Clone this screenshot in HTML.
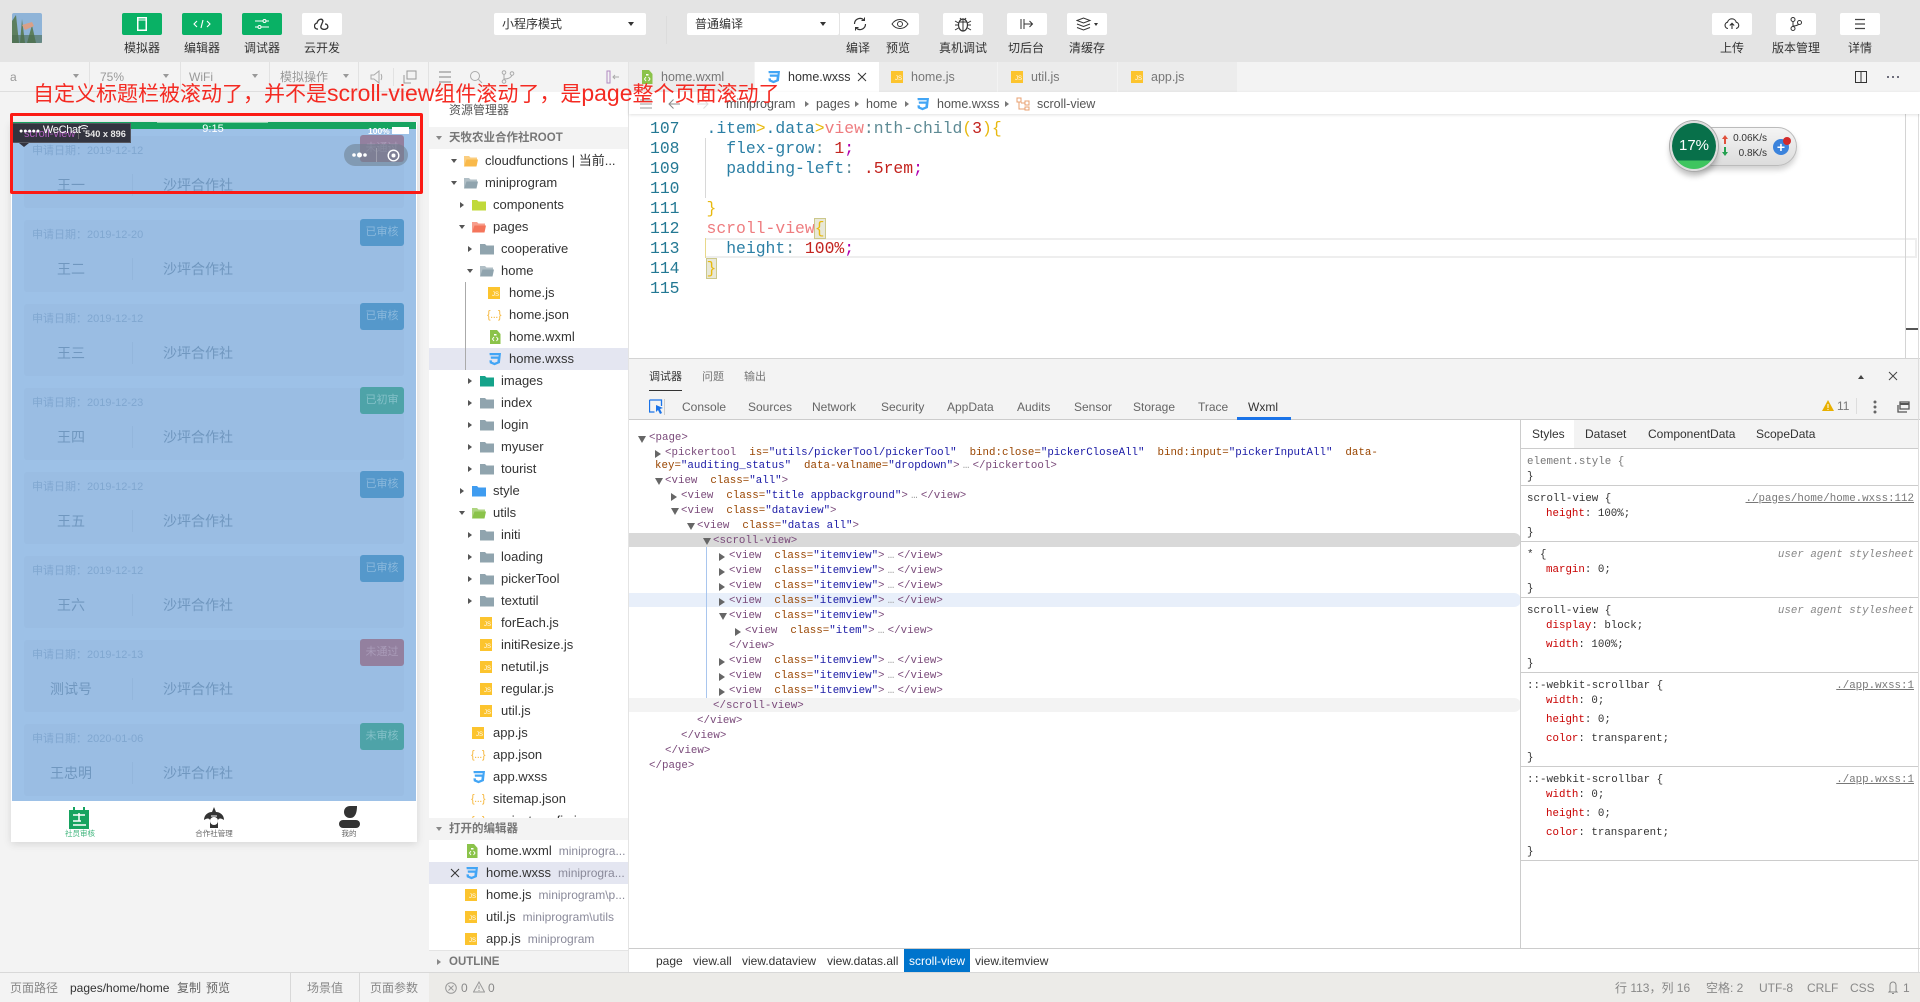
<!DOCTYPE html>
<html lang="zh-CN"><head><meta charset="utf-8"><title>微信开发者工具</title>
<style>
*{box-sizing:border-box;margin:0;padding:0}
html,body{width:1920px;height:1002px;overflow:hidden;background:#fff;font-family:"Liberation Sans","Noto Sans CJK SC",sans-serif;color:#333}
body{position:relative}
.p{position:absolute}
.b{position:absolute;top:13px;width:40px;height:22px;background:#fff;border-radius:2px;display:flex;align-items:center;justify-content:center}
.g{background:#09b165}
.lb{position:absolute;top:41px;font-size:12px;line-height:14px;text-align:center;color:#333;transform:translateX(-50%);white-space:nowrap}
.sel{position:absolute;top:13px;height:22px;background:#fff;font-size:12px;line-height:22px;padding-left:8px;border-radius:2px}
.car{position:absolute;width:0;height:0;border-left:3px solid transparent;border-right:3px solid transparent;border-top:4px solid #333}
.st{position:absolute;top:70px;font-size:12px;line-height:14px;color:#999;white-space:nowrap}
.dv{position:absolute;top:62px;width:1px;height:30px;background:#e2e2e2}
.tab{position:absolute;top:62px;height:30px;background:#ececec;border-right:1px solid #f3f3f3}
.tt{position:absolute;top:69px;font-size:12.5px;line-height:16px;color:#777;white-space:nowrap}
.js{position:absolute;display:block;width:12px;height:12px;background:#fcc42e;color:#fff;font:normal 6px/7px "Liberation Sans",sans-serif;text-align:right;padding:5px 1px 0 0}
.t{position:absolute;left:429px;width:199px;height:22px;font-size:13px;line-height:22px;white-space:nowrap;color:#333}
.t span{position:absolute;left:calc(var(--x) - 429px)}
.t svg,.t .js{position:absolute;left:calc(var(--x) - 450px);top:4px;width:14px;height:14px}
.t .js{width:12px;height:12px;top:5px}
.t .jn{position:absolute;left:calc(var(--x) - 451px);top:0;color:#f6b73c;font-size:11px;letter-spacing:-.5px;font-style:normal}
.t em{font-style:normal;position:absolute}
.a{position:absolute;left:calc(var(--x) - 462px);top:8px;width:0;height:0;border-top:3.5px solid transparent;border-bottom:3.5px solid transparent;border-left:4px solid #555}
.a.d{left:calc(var(--x) - 463px);top:9px;border-left:3.5px solid transparent;border-right:3.5px solid transparent;border-top:4px solid #555;border-bottom:0}
.l0{--x:485px}.l1{--x:493px}.l2{--x:501px}.l3{--x:509px}
.sec{position:absolute;left:429px;width:199px;height:22px;background:#f3f3f3;font-size:11.5px;line-height:22px;font-weight:bold;color:#777;z-index:3;padding-left:20px;white-space:nowrap}
.sec b{position:absolute;left:7px;top:9px;width:0;height:0;border-left:3.5px solid transparent;border-right:3.5px solid transparent;border-top:4px solid #888}
.o{position:absolute;left:429px;width:199px;height:22px;font-size:13px;line-height:22px;white-space:nowrap}
.o span{position:absolute;left:57px}
.o small{font-size:12px;color:#8a8a9a;margin-left:7px}
.o svg{position:absolute;left:36px;top:4px;width:14px;height:14px}
.o .js{left:36px;top:5px}
.c{position:absolute;font:16.4px/20px "Liberation Mono",monospace;white-space:pre;left:706.5px}
.ln{position:absolute;left:650px;font:16.4px/20px "Liberation Mono",monospace;color:#237893}
.k{color:#2b7fa5}.go{color:#e8b90f}.pk{color:#ee7c7f}.gr{color:#5d8a94}.rd{color:#c3231e}.pu{color:#b000b0}
.dt{position:absolute;top:400px;font-size:12px;line-height:14px;color:#666;white-space:nowrap}
.m{position:absolute;font:10.8px/15px "Liberation Mono",monospace;white-space:pre;color:#7a4a7a}
.m i{font-style:normal;color:#994500}.m u{text-decoration:none;color:#1a1aa6}.m s{text-decoration:none;color:#999;display:inline-block;width:13px;text-align:center}
.ar{position:absolute;width:0;height:0;border-top:4px solid transparent;border-bottom:4px solid transparent;border-left:6px solid #666}
.ad{position:absolute;width:0;height:0;border-left:4px solid transparent;border-right:4px solid transparent;border-top:7px solid #666}
.y{position:absolute;font:10.8px/15px "Liberation Mono",monospace;white-space:pre;color:#333}
.y b{font-weight:normal;color:#c80000}
.ln2{position:absolute;left:1521px;width:397px;height:1px;background:#ccc}
.src{position:absolute;right:6px;font:10.8px/15px "Liberation Mono",monospace;color:#777;text-decoration:underline;white-space:pre}
.ua{position:absolute;right:6px;font:italic 10.8px/15px "Liberation Mono",monospace;color:#888;white-space:pre}
.bc{position:absolute;top:953px;font-size:12px;line-height:16px;color:#333;white-space:nowrap}
.sb{position:absolute;top:980px;font-size:12px;line-height:16px;color:#888;white-space:nowrap}
.card{position:absolute;left:24px;width:380px;height:72px;background:#9abde3;border-radius:3px}
.card .d{position:absolute;left:8px;top:7px;font-size:11px;line-height:16px;color:#80a7d0;white-space:nowrap}
.card .nm{position:absolute;left:0;top:39px;width:94px;text-align:center;font-size:14px;line-height:20px;color:#7097bf}
.card .co{position:absolute;left:139px;top:39px;font-size:14px;line-height:20px;color:#7097bf}
.card .sp{position:absolute;left:108px;top:38px;width:1px;height:22px;background:#93b6dc}
.bd{position:absolute;left:336px;top:-1px;width:44px;height:27px;border-radius:3px;background:#5598cb;color:#8ab8dc;font-size:11px;line-height:27px;text-align:center}
.bd.te{background:#4ea3a8;color:#84c0c8}.bd.pr{background:#93809f;color:#a99bb8}
.ti{position:absolute;top:829px;font-size:7.5px;line-height:9px;text-align:center;transform:translateX(-50%);color:#666;white-space:nowrap}
.big{font-size:23px}
</style></head><body>
<svg width="0" height="0" style="position:absolute"><defs>
<symbol id="f" viewBox="0 0 14 14"><path d="M0 2h5l1.5 1.5H14V12.5H0z" fill="currentColor"/></symbol>
<symbol id="fo" viewBox="0 0 14 14"><path d="M0 2h5l1.5 1.5H13V6H3L0 12z" fill="currentColor" opacity=".7"/><path d="M2.500 5.500H14L12.500 12.500H0z" fill="currentColor"/></symbol>
<symbol id="css" viewBox="0 0 14 14"><path d="M1.500 1h11.500l-1.100 10-5.400 2.200-4.700-1.900-.4-2.900h2.400l.2 1.300 2.500 1 2.900-1.100.3-2.900H2.900l-.2-2.200h7.800l.2-1.300H1.700z" fill="#42a5f5"/></symbol>
<symbol id="xm" viewBox="0 0 14 14"><path d="M2 0h7l3.500 4v10H2z" fill="#8bc34a"/><path d="M6 7L4.500 9 6 11M8.500 7L10 9 8.500 11" stroke="#fff" stroke-width="1" fill="none"/><rect x="6" y="4" width="2.500" height="1.500" fill="#fff"/></symbol>
</defs></svg>

<!-- top toolbar -->
<div class="p" style="left:0;top:0;width:1920px;height:62px;background:#e4e4e4"></div>
<svg class="p" style="left:12px;top:13px" width="30" height="30" viewBox="0 0 30 30"><rect width="30" height="30" rx="2" fill="#8fb4d8"/><path d="M0 30V8l4-6 3 28zM8 30l2-24 3 24zM15 30l5-18 4 18z" fill="#5d7f5e"/><path d="M10 12l10-3 2 4-9 4z" fill="#d9a088"/><rect y="22" width="30" height="8" fill="#4a6a50" opacity=".6"/></svg>
<div class="b g" style="left:122px"><svg width="10" height="14" viewBox="0 0 10 14"><rect x=".75" y=".75" width="8.500" height="12.500" fill="none" stroke="#fff" stroke-width="1.500"/><path d="M1 3h8" stroke="#fff"/></svg></div>
<div class="b g" style="left:182px"><svg width="18" height="10" viewBox="0 0 18 10"><path d="M4 2L1 5l3 3M14 2l3 3-3 3M10 1L8 9" stroke="#fff" fill="none" stroke-width="1.100"/></svg></div>
<div class="b g" style="left:242px"><svg width="14" height="12" viewBox="0 0 14 12"><path d="M0 3h8M11 3h3M0 9h3M6 9h8" stroke="#fff"/><circle cx="9.500" cy="3" r="1.500" fill="none" stroke="#fff"/><circle cx="4.500" cy="9" r="1.500" fill="none" stroke="#fff"/></svg></div>
<div class="b" style="left:302px"><svg width="16" height="12" viewBox="0 0 16 12"><path d="M4 11a3 3 0 0 1-1-6c1-4 5-5 6-2L7 8c-1 3 3 4 5 3 3-1 2-5-1-5" fill="none" stroke="#333" stroke-width="1.300"/></svg></div>
<div class="lb" style="left:142px">模拟器</div><div class="lb" style="left:202px">编辑器</div><div class="lb" style="left:262px">调试器</div><div class="lb" style="left:322px">云开发</div>
<div class="sel" style="left:494px;width:152px">小程序模式</div><div class="car" style="left:628px;top:22px"></div>
<div class="p" style="left:666px;top:16px;width:1px;height:28px;background:#dcdcdc"></div>
<div class="sel" style="left:687px;width:152px">普通编译</div><div class="car" style="left:820px;top:22px"></div>
<div class="b" style="left:840px;border-radius:0"><svg width="16" height="16" viewBox="0 0 16 16"><path d="M2.500 8a5.500 5.500 0 0 1 9.500-3.800M13.500 8A5.500 5.500 0 0 1 4 11.800" fill="none" stroke="#333" stroke-width="1.200"/><path d="M12.500 1.500v3h-3M3.500 14.500v-3h3" fill="none" stroke="#333"/></svg></div>
<div class="b" style="left:880px;width:39px;border-radius:0 2px 2px 0"><svg width="18" height="12" viewBox="0 0 18 12"><path d="M1 6c4-6 12-6 16 0-4 6-12 6-16 0z" fill="none" stroke="#333"/><circle cx="9" cy="6" r="2.500" fill="none" stroke="#333"/></svg></div>
<div class="lb" style="left:858px">编译</div><div class="lb" style="left:898px">预览</div>
<div class="b" style="left:943px"><svg width="18" height="16" viewBox="0 0 18 16"><ellipse cx="9" cy="9" rx="4.500" ry="6" fill="none" stroke="#333" stroke-width="1.200"/><path d="M9 3v12M6 2l1.500 2M12 2l-1.500 2M1 5l3.500 2M17 5l-3.500 2M1 9h3M14 9h3M1 14l3.500-2M17 14l-3.500-2M5 6h8" stroke="#333"/></svg></div>
<div class="b" style="left:1007px"><svg width="14" height="12" viewBox="0 0 14 12"><path d="M1 1v10M4 1v10M4 6h8M9.500 3l3 3-3 3" fill="none" stroke="#333"/></svg></div>
<div class="b" style="left:1067px"><svg width="22" height="14" viewBox="0 0 22 14"><path d="M1 3.500L7.500 1 14 3.500 7.500 6zM1 7l6.500 2.500L14 7M1 10.500L7.500 13 14 10.500" fill="none" stroke="#333"/><path d="M18 6h4l-2 3z" fill="#333"/></svg></div>
<div class="lb" style="left:963px">真机调试</div><div class="lb" style="left:1026px">切后台</div><div class="lb" style="left:1087px">清缓存</div>
<div class="b" style="left:1712px"><svg width="16" height="12" viewBox="0 0 16 12"><path d="M4 10.500a3.200 3.200 0 0 1-.5-6.300 4.500 4.500 0 0 1 8.700 0 3.200 3.200 0 0 1-.2 6.300M8 11V5.500M5.800 7.500L8 5.300l2.200 2.200" fill="none" stroke="#333" stroke-width="1.100"/></svg></div>
<div class="b" style="left:1776px"><svg width="12" height="14" viewBox="0 0 12 14"><circle cx="3" cy="2.500" r="2" fill="none" stroke="#333"/><circle cx="3" cy="11.500" r="2" fill="none" stroke="#333"/><circle cx="9.500" cy="5.500" r="2" fill="none" stroke="#333"/><path d="M3 4.500v5M3 9c3 0 5-1 6-2" fill="none" stroke="#333"/></svg></div>
<div class="b" style="left:1840px"><svg width="12" height="12" viewBox="0 0 12 12"><path d="M1 1.500h10M1 6h10M1 10.500h10" stroke="#444" stroke-width="1.300"/></svg></div>
<div class="lb" style="left:1732px">上传</div><div class="lb" style="left:1796px">版本管理</div><div class="lb" style="left:1860px">详情</div>

<!-- simulator toolbar + area -->
<div class="p" style="left:0;top:62px;width:429px;height:910px;background:#f3f3f3"></div>
<div class="p" style="left:0;top:91px;width:429px;height:1px;background:#dedede"></div>
<div class="dv" style="left:89px"></div><div class="dv" style="left:180px"></div><div class="dv" style="left:269px"></div><div class="dv" style="left:358px"></div><div class="dv" style="left:393px;top:68px;height:18px"></div><div class="dv" style="left:428px"></div>
<div class="st" style="left:10px">a</div><div class="st" style="left:100px">75%</div><div class="st" style="left:189px">WiFi</div><div class="st" style="left:280px">模拟操作</div>
<div class="car" style="left:73px;top:74px;border-top-color:#999"></div><div class="car" style="left:163px;top:74px;border-top-color:#999"></div><div class="car" style="left:252px;top:74px;border-top-color:#999"></div><div class="car" style="left:343px;top:74px;border-top-color:#999"></div>
<svg class="p" style="left:370px;top:70px" width="14" height="14" viewBox="0 0 14 14"><path d="M1 5h3l5-4v12l-5-4H1zM11 4c1 2 1 4 0 6" fill="none" stroke="#aaa"/></svg>
<svg class="p" style="left:403px;top:70px" width="14" height="14" viewBox="0 0 14 14"><path d="M4 1h9v8H4zM1 5v8h7" fill="none" stroke="#999"/></svg>
<!-- explorer toolbar -->
<div class="p" style="left:429px;top:62px;width:199px;height:30px;background:#f3f3f3"></div>
<svg class="p" style="left:438px;top:70px" width="14" height="14" viewBox="0 0 14 14"><path d="M1 2h12M1 7h12M1 12h12" stroke="#999" stroke-width="1.300"/></svg>
<svg class="p" style="left:469px;top:70px" width="14" height="14" viewBox="0 0 14 14"><circle cx="6" cy="6" r="4.500" fill="none" stroke="#aaa"/><path d="M9.500 9.500L13 13" stroke="#aaa"/></svg>
<svg class="p" style="left:501px;top:70px" width="14" height="14" viewBox="0 0 14 14"><circle cx="3" cy="2.500" r="1.800" fill="none" stroke="#aaa"/><circle cx="3" cy="11.500" r="1.800" fill="none" stroke="#aaa"/><circle cx="11" cy="3.500" r="1.800" fill="none" stroke="#aaa"/><path d="M3 4.500v5M3 9c4 0 7-1 8-4" fill="none" stroke="#aaa"/></svg>
<svg class="p" style="left:606px;top:70px" width="14" height="14" viewBox="0 0 14 14"><rect x="1" y="1" width="3" height="12" fill="none" stroke="#b08ac0"/><path d="M13 7H7M9 5L7 7l2 2" fill="none" stroke="#aaa"/></svg>

<!-- phone -->
<div class="p" style="left:11px;top:122px;width:406px;height:720px;background:#fff;box-shadow:0 2px 8px rgba(0,0,0,.12)"></div>
<div class="p" style="left:12px;top:122px;width:404px;height:679px;background:#9dc1e7;overflow:hidden">
 <div class="p" style="left:0;top:0;width:404px;height:7px;background:#16a35f"></div>
 <div class="p" style="left:145px;top:0;width:111px;height:1px;background:#8fd6ad"></div>
</div>
<div class="card" style="top:136px"><div class="d">申请日期：2019-12-12</div><div class="nm">王一</div><div class="sp"></div><div class="co">沙坪合作社</div><div class="bd pr">未通过</div></div>
<div class="card" style="top:220px"><div class="d">申请日期：2019-12-20</div><div class="nm">王二</div><div class="sp"></div><div class="co">沙坪合作社</div><div class="bd">已审核</div></div>
<div class="card" style="top:304px"><div class="d">申请日期：2019-12-12</div><div class="nm">王三</div><div class="sp"></div><div class="co">沙坪合作社</div><div class="bd">已审核</div></div>
<div class="card" style="top:388px"><div class="d">申请日期：2019-12-23</div><div class="nm">王四</div><div class="sp"></div><div class="co">沙坪合作社</div><div class="bd te">已初审</div></div>
<div class="card" style="top:472px"><div class="d">申请日期：2019-12-12</div><div class="nm">王五</div><div class="sp"></div><div class="co">沙坪合作社</div><div class="bd">已审核</div></div>
<div class="card" style="top:556px"><div class="d">申请日期：2019-12-12</div><div class="nm">王六</div><div class="sp"></div><div class="co">沙坪合作社</div><div class="bd">已审核</div></div>
<div class="card" style="top:640px"><div class="d">申请日期：2019-12-13</div><div class="nm">测试号</div><div class="sp"></div><div class="co">沙坪合作社</div><div class="bd pr">未通过</div></div>
<div class="card" style="top:724px"><div class="d">申请日期：2020-01-06</div><div class="nm">王忠明</div><div class="sp"></div><div class="co">沙坪合作社</div><div class="bd te">未审核</div></div>
<!-- phone tabbar -->
<svg class="p" style="left:69px;top:807px" width="21" height="22" viewBox="0 0 21 22"><path d="M0 3h4V0h2v3h8V0h2v3h4v19H0z" fill="#16a35f"/><path d="M4 8h12M10 6v8M4 14h8M4 18h13" stroke="#fff" stroke-width="1.500"/></svg>
<svg class="p" style="left:204px;top:807px" width="20" height="22" viewBox="0 0 20 22"><path d="M10 0l2 5c4 0 8 3 8 8-3-2-5-2-6 0v8H6v-8c-1-2-3-2-6 0 0-5 4-8 8-8z" fill="#333"/><circle cx="10" cy="14" r="4" fill="#fff"/><path d="M7 9h6" stroke="#fff"/></svg>
<svg class="p" style="left:339px;top:806px" width="21" height="22" viewBox="0 0 21 22"><path d="M5 6c0-4 3-6 6-6h7c0 5-1 12-7 12-4 0-6-3-6-6z" fill="#333"/><rect x="0" y="14" width="21" height="8" rx="4" fill="#333"/></svg>
<div class="ti" style="left:80px;color:#3fb57c">社员审核</div><div class="ti" style="left:214px">合作社管理</div><div class="ti" style="left:349px">我的</div>
<!-- phone overlay -->
<div class="p" style="left:200px;top:122px;font-size:11px;line-height:14px;color:#fff;width:26px;text-align:center">9:15</div>
<div class="p" style="left:368px;top:125px;font-size:8.500px;line-height:12px;color:#fff;font-weight:bold">100%</div>
<div class="p" style="left:392px;top:127px;width:17px;height:7px;background:#fff;border:1px solid #fff"></div>
<div class="p" style="left:344px;top:144px;width:64px;height:22px;border-radius:11px;background:rgba(110,125,140,.55)"></div>
<div class="p" style="left:376px;top:148px;width:1px;height:14px;background:rgba(255,255,255,.25)"></div>
<svg class="p" style="left:352px;top:150px" width="16" height="10" viewBox="0 0 16 10"><circle cx="2" cy="5" r="1.800" fill="#fff"/><circle cx="7.500" cy="5" r="2.500" fill="#fff"/><circle cx="13" cy="5" r="1.800" fill="#fff"/></svg>
<svg class="p" style="left:387px;top:149px" width="13" height="13" viewBox="0 0 13 13"><circle cx="6.500" cy="6.500" r="5.300" fill="none" stroke="#fff" stroke-width="1.400"/><circle cx="6.500" cy="6.500" r="2" fill="#fff"/></svg>
<div class="p" style="left:12px;top:123px;width:119px;height:20px;background:#33343f;border:1px solid #55565f"></div>
<div class="p" style="left:19px;top:143px;width:0;height:0;border-left:5px solid transparent;border-right:5px solid transparent;border-top:4px solid #33343f"></div>
<div class="p" style="left:24px;top:127px;font-size:11px;line-height:14px;color:#b05fc0">scroll-view</div>
<div class="p" style="left:85px;top:127px;font-size:9.200px;line-height:14px;color:#e8e8e8;font-weight:bold;white-space:nowrap">540 x 896</div>
<div class="p" style="left:78px;top:129px;width:1px;height:10px;background:#666"></div>
<div class="p" style="left:19px;top:123px;font-size:11px;line-height:14px;color:#fff;white-space:nowrap;letter-spacing:-.3px"><span style="font-size:7px;letter-spacing:0">●●●●●</span> WeChat</div>
<svg class="p" style="left:80px;top:125px" width="8" height="7" viewBox="0 0 8 7"><path d="M0 2c2-2 6-2 8 0M1.500 4c1.500-1 3.500-1 5 0" stroke="#fff" fill="none"/><path d="M3 5.500h2L4 7z" fill="#fff"/></svg>

<!-- explorer -->
<div class="p" style="left:429px;top:92px;width:199px;height:880px;background:#fff"></div>
<div class="p" style="left:628px;top:62px;width:1px;height:910px;background:#e4e4e4"></div>
<div class="p" style="left:449px;top:103px;font-size:12px;line-height:14px;color:#555">资源管理器</div>
<div class="sec" style="top:127px"><b></b>天牧农业合作社ROOT</div>
<div class="p" style="left:429px;top:348px;width:199px;height:22px;background:#e4e6f1"></div>
<div class="p" style="left:465px;top:282px;width:1px;height:88px;background:#aaa;z-index:2"></div>

<div class="t l0" style="top:150px"><b class="a d"></b><svg style="color:#f9b94a"><use href="#fo"/></svg><span>cloudfunctions | 当前...</span></div>
<div class="t l0" style="top:172px"><b class="a d"></b><svg style="color:#90a4ae"><use href="#fo"/></svg><span>miniprogram</span></div>
<div class="t l1" style="top:194px"><b class="a"></b><svg style="color:#c0d93a"><use href="#f"/></svg><span>components</span></div>
<div class="t l1" style="top:216px"><b class="a d"></b><svg style="color:#f4755b"><use href="#fo"/></svg><span>pages</span></div>
<div class="t l2" style="top:238px"><b class="a"></b><svg style="color:#90a4ae"><use href="#f"/></svg><span>cooperative</span></div>
<div class="t l2" style="top:260px"><b class="a d"></b><svg style="color:#90a4ae"><use href="#fo"/></svg><span>home</span></div>
<div class="t l3" style="top:282px"><i class="js">JS</i><span>home.js</span></div>
<div class="t l3" style="top:304px"><i class="jn">{...}</i><span>home.json</span></div>
<div class="t l3" style="top:326px"><svg><use href="#xm"/></svg><span>home.wxml</span></div>
<div class="t l3" style="top:348px"><svg><use href="#css"/></svg><span>home.wxss</span></div>
<div class="t l2" style="top:370px"><b class="a"></b><svg style="color:#15a38a"><use href="#f"/></svg><span>images</span></div>
<div class="t l2" style="top:392px"><b class="a"></b><svg style="color:#90a4ae"><use href="#f"/></svg><span>index</span></div>
<div class="t l2" style="top:414px"><b class="a"></b><svg style="color:#90a4ae"><use href="#f"/></svg><span>login</span></div>
<div class="t l2" style="top:436px"><b class="a"></b><svg style="color:#90a4ae"><use href="#f"/></svg><span>myuser</span></div>
<div class="t l2" style="top:458px"><b class="a"></b><svg style="color:#90a4ae"><use href="#f"/></svg><span>tourist</span></div>
<div class="t l1" style="top:480px"><b class="a"></b><svg style="color:#3f9cf0"><use href="#f"/></svg><span>style</span></div>
<div class="t l1" style="top:502px"><b class="a d"></b><svg style="color:#8bc34a"><use href="#fo"/></svg><span>utils</span></div>
<div class="t l2" style="top:524px"><b class="a"></b><svg style="color:#90a4ae"><use href="#f"/></svg><span>initi</span></div>
<div class="t l2" style="top:546px"><b class="a"></b><svg style="color:#90a4ae"><use href="#f"/></svg><span>loading</span></div>
<div class="t l2" style="top:568px"><b class="a"></b><svg style="color:#90a4ae"><use href="#f"/></svg><span>pickerTool</span></div>
<div class="t l2" style="top:590px"><b class="a"></b><svg style="color:#90a4ae"><use href="#f"/></svg><span>textutil</span></div>
<div class="t l2" style="top:612px"><i class="js">JS</i><span>forEach.js</span></div>
<div class="t l2" style="top:634px"><i class="js">JS</i><span>initiResize.js</span></div>
<div class="t l2" style="top:656px"><i class="js">JS</i><span>netutil.js</span></div>
<div class="t l2" style="top:678px"><i class="js">JS</i><span>regular.js</span></div>
<div class="t l2" style="top:700px"><i class="js">JS</i><span>util.js</span></div>
<div class="t l1" style="top:722px"><i class="js">JS</i><span>app.js</span></div>
<div class="t l1" style="top:744px"><i class="jn">{...}</i><span>app.json</span></div>
<div class="t l1" style="top:766px"><svg><use href="#css"/></svg><span>app.wxss</span></div>
<div class="t l1" style="top:788px"><i class="jn">{...}</i><span>sitemap.json</span></div>
<div class="t l1" style="top:810px"><i class="jn">{...}</i><span>project.config.json</span></div>

<div class="sec" style="top:818px"><b></b>打开的编辑器</div>
<div class="o" style="top:840px"><svg><use href="#xm"/></svg><span>home.wxml<small>miniprogra...</small></span></div>
<div class="o" style="top:862px;background:#e4e6f1"><svg><use href="#css"/></svg><svg style="left:20px;top:5px;width:12px;height:12px" viewBox="0 0 12 12"><path d="M2 2l8 8M10 2l-8 8" stroke="#333"/></svg><span>home.wxss<small>miniprogra...</small></span></div>
<div class="o" style="top:884px"><i class="js">JS</i><span>home.js<small>miniprogram\p...</small></span></div>
<div class="o" style="top:906px"><i class="js">JS</i><span>util.js<small>miniprogram\utils</small></span></div>
<div class="o" style="top:928px"><i class="js">JS</i><span>app.js<small>miniprogram</small></span></div>
<div class="sec" style="top:950px;border-top:1px solid #e4e4e4"><b style="border:0;border-top:3.500px solid transparent;border-bottom:3.500px solid transparent;border-left:4px solid #888;left:8px;top:8px"></b>OUTLINE</div>

<!-- editor tabs -->
<div class="p" style="left:629px;top:62px;width:1291px;height:30px;background:#f3f3f3"></div>
<div class="tab" style="left:629px;width:126px"></div>
<div class="p" style="left:755px;top:62px;width:124px;height:30px;background:#fff"></div>
<div class="tab" style="left:879px;width:119px"></div><div class="tab" style="left:998px;width:120px"></div><div class="tab" style="left:1118px;width:120px"></div>
<svg class="p" style="left:640px;top:70px" width="14" height="14"><use href="#xm"/></svg>
<div class="tt" style="left:661px">home.wxml</div>
<svg class="p" style="left:767px;top:70px" width="14" height="14"><use href="#css"/></svg>
<div class="tt" style="left:788px;color:#333">home.wxss</div>
<svg class="p" style="left:856px;top:71px" width="12" height="12" viewBox="0 0 12 12"><path d="M2 2l8 8M10 2l-8 8" stroke="#333"/></svg>
<i class="js" style="left:891px;top:71px">JS</i><div class="tt" style="left:911px">home.js</div>
<i class="js" style="left:1011px;top:71px">JS</i><div class="tt" style="left:1031px">util.js</div>
<i class="js" style="left:1131px;top:71px">JS</i><div class="tt" style="left:1151px">app.js</div>
<svg class="p" style="left:1854px;top:70px" width="14" height="14" viewBox="0 0 14 14"><rect x="1.500" y="1.500" width="11" height="11" fill="none" stroke="#333"/><path d="M7 1.500v11" stroke="#333"/></svg>
<svg class="p" style="left:1885px;top:73px" width="16" height="8" viewBox="0 0 16 8"><circle cx="3" cy="4" r="1" fill="#445"/><circle cx="8" cy="4" r="1" fill="#445"/><circle cx="13" cy="4" r="1" fill="#445"/></svg>

<!-- breadcrumb -->
<div class="p" style="left:629px;top:92px;width:1291px;height:22px;background:#fff;box-shadow:0 1px 3px rgba(0,0,0,.12);z-index:1"></div>
<div style="position:absolute;left:0;top:0;z-index:2">
<svg class="p" style="left:640px;top:98px" width="12" height="12" viewBox="0 0 12 12"><path d="M0 2h12M0 6h12M0 10h12" stroke="#999"/></svg>
<svg class="p" style="left:668px;top:98px" width="13" height="12" viewBox="0 0 13 12"><path d="M12 6H1M5.500 1.500L1 6l4.500 4.500" fill="none" stroke="#888"/></svg>
<svg class="p" style="left:696px;top:98px" width="13" height="12" viewBox="0 0 13 12"><path d="M1 6h11M7.500 1.500L12 6l-4.500 4.500" fill="none" stroke="#ddd"/></svg>
<div class="tt" style="left:726px;top:96px;color:#555">miniprogram</div><div class="tt" style="left:816px;top:96px;color:#555">pages</div><div class="tt" style="left:866px;top:96px;color:#555">home</div><div class="tt" style="left:937px;top:96px;color:#555">home.wxss</div><div class="tt" style="left:1037px;top:96px;color:#555">scroll-view</div>
<svg class="p" style="left:916px;top:97px" width="14" height="14"><use href="#css"/></svg>
<svg class="p" style="left:1016px;top:97px" width="14" height="14" viewBox="0 0 14 14"><rect x="1" y="1" width="4" height="4" fill="none" stroke="#e8a070"/><rect x="9" y="4" width="4" height="4" fill="none" stroke="#e8a070"/><rect x="9" y="10" width="4" height="3" fill="none" stroke="#e8a070"/><path d="M3 5v7h6M5 6h4" fill="none" stroke="#e8a070"/></svg>
<div class="car" style="left:805px;top:101px;border:0;border-top:3px solid transparent;border-bottom:3px solid transparent;border-left:4px solid #777"></div>
<div class="car" style="left:855px;top:101px;border:0;border-top:3px solid transparent;border-bottom:3px solid transparent;border-left:4px solid #777"></div>
<div class="car" style="left:905px;top:101px;border:0;border-top:3px solid transparent;border-bottom:3px solid transparent;border-left:4px solid #777"></div>
<div class="car" style="left:1005px;top:101px;border:0;border-top:3px solid transparent;border-bottom:3px solid transparent;border-left:4px solid #777"></div>
</div>

<!-- code -->
<div class="p" style="left:706px;top:238px;width:1211px;height:20px;border:2px solid #eee;border-left:0"></div>
<div class="p" style="left:705px;top:138px;width:1px;height:60px;background:#d8d8d8"></div>
<div class="p" style="left:705px;top:238px;width:1px;height:20px;background:#e8d88a"></div>
<div class="p" style="left:1905px;top:114px;width:1px;height:244px;background:#d4d4d4"></div>
<div class="p" style="left:1906px;top:328px;width:13px;height:2px;background:#555"></div>
<div class="p" style="left:1918px;top:114px;width:1px;height:244px;background:#ddd"></div>
<div style="position:absolute;left:0;top:1px">
<div class="ln" style="top:118px">107</div><div class="ln" style="top:138px">108</div><div class="ln" style="top:158px">109</div><div class="ln" style="top:178px">110</div><div class="ln" style="top:198px">111</div><div class="ln" style="top:218px">112</div><div class="ln" style="top:238px">113</div><div class="ln" style="top:258px">114</div><div class="ln" style="top:278px">115</div>
<div class="c" style="top:118px"><span class="k">.item</span><span class="go">&gt;</span><span class="k">.data</span><span class="go">&gt;</span><span class="pk">view</span><span class="gr">:nth-child</span><span class="go">(</span><span class="rd">3</span><span class="go">){</span></div>
<div class="c" style="top:138px">  <span class="k">flex-grow</span><span class="gr">:</span> <span class="rd">1</span><span class="pu">;</span></div>
<div class="c" style="top:158px">  <span class="k">padding-left</span><span class="gr">:</span> <span class="rd">.5rem</span><span class="pu">;</span></div>
<div class="c" style="top:198px"><span class="go">}</span></div>
<div class="c" style="top:218px"><span class="pk">scroll-view</span><span class="go" style="background:#e8e8d8;outline:1px solid #ccc88a">{</span></div>
<div class="c" style="top:238px">  <span class="k">height</span><span class="gr">:</span> <span class="rd">100%</span><span class="pu">;</span></div>
<div class="c" style="top:258px"><span class="go" style="background:#e8e8d8;outline:1px solid #ccc88a">}</span></div>
</div>

<!-- float widget -->
<div class="p" style="left:1693px;top:127px;width:104px;height:39px;border-radius:0 20px 20px 0;background:linear-gradient(#f4f4f4,#dcdcdc);border:1px solid #bbb;box-shadow:0 4px 6px rgba(0,0,0,.18);z-index:3"></div>
<div class="p" style="left:1670px;top:121px;width:48px;height:50px;border-radius:50%;background:linear-gradient(#08704a 82%,#3fc55f 82%);border:2px solid #ddd;box-shadow:0 0 0 1px #aaa,0 5px 6px rgba(0,0,0,.25);z-index:4;color:#fff;font-size:15px;line-height:46px;text-align:center">17%</div>
<svg class="p" style="left:1721px;top:134px;z-index:4" width="8" height="32" viewBox="0 0 8 32"><path d="M4 1L7 5H5v5H3V5H1z" fill="#e0513c"/><path d="M4 22l3-4H5v-5H3v5H1z" fill="#24a050"/></svg>
<div class="p" style="left:1727px;top:133px;width:40px;text-align:right;font-size:10px;line-height:12px;color:#333;z-index:4">0.06K/s</div>
<div class="p" style="left:1727px;top:148px;width:40px;text-align:right;font-size:10px;line-height:12px;color:#333;z-index:4">0.8K/s</div>
<div class="p" style="left:1773px;top:139px;width:16px;height:16px;border-radius:50%;background:#3b83dc;color:#fff;font:bold 14px/16px 'Liberation Sans',sans-serif;text-align:center;z-index:4">+</div>
<div class="p" style="left:1783px;top:137px;width:8px;height:8px;border-radius:50%;background:#d32a2a;z-index:5"></div>

<!-- devtools -->
<div class="p" style="left:629px;top:358px;width:1291px;height:62px;background:#f3f3f3;border-top:1px solid #d4d4d4;border-bottom:1px solid #ccc"></div>
<div class="p" style="left:649px;top:370px;font-size:11px;line-height:14px;color:#333">调试器</div><div class="p" style="left:702px;top:370px;font-size:11px;line-height:14px;color:#777">问题</div><div class="p" style="left:744px;top:370px;font-size:11px;line-height:14px;color:#777">输出</div>
<div class="p" style="left:649px;top:390px;width:33px;height:1px;background:#333"></div>
<svg class="p" style="left:649px;top:399px" width="15" height="16" viewBox="0 0 15 16"><path d="M.500 1h12v6M.500 1v12h5" fill="none" stroke="#1a73e8" stroke-width="1.300"/><path d="M7 6l7 3-3 1 2 4-2 1-2-4-2 2z" fill="#1a73e8"/></svg>
<div class="p" style="left:664px;top:399px;width:1px;height:16px;background:#ccc"></div>
<div class="dt" style="left:682px">Console</div><div class="dt" style="left:748px">Sources</div><div class="dt" style="left:812px">Network</div><div class="dt" style="left:881px">Security</div><div class="dt" style="left:947px">AppData</div><div class="dt" style="left:1017px">Audits</div><div class="dt" style="left:1074px">Sensor</div><div class="dt" style="left:1133px">Storage</div><div class="dt" style="left:1198px">Trace</div><div class="dt" style="left:1248px;color:#333">Wxml</div>
<div class="p" style="left:1237px;top:417px;width:54px;height:3px;background:#1a73e8"></div>
<div class="car" style="left:1858px;top:375px;border-top:0;border-bottom:4px solid #444"></div>
<svg class="p" style="left:1888px;top:371px" width="10" height="10" viewBox="0 0 10 10"><path d="M1 1l8 8M9 1L1 9" stroke="#444"/></svg>
<svg class="p" style="left:1822px;top:400px" width="12" height="11" viewBox="0 0 12 11"><path d="M6 0l6 11H0z" fill="#e8b000"/><path d="M6 4v4M6 9v1" stroke="#fff"/></svg>
<div class="p" style="left:1837px;top:399px;font-size:12px;line-height:14px;color:#777">11</div>
<div class="p" style="left:1856px;top:398px;width:1px;height:16px;background:#ddd"></div>
<svg class="p" style="left:1873px;top:400px" width="4" height="14" viewBox="0 0 4 14"><circle cx="2" cy="2" r="1.500" fill="#666"/><circle cx="2" cy="7" r="1.500" fill="#666"/><circle cx="2" cy="12" r="1.500" fill="#666"/></svg>
<svg class="p" style="left:1897px;top:401px" width="13" height="12" viewBox="0 0 13 12"><path d="M3 1h9v7H3z" fill="none" stroke="#555" stroke-width="1.300"/><path d="M3 3h9" stroke="#555" stroke-width="2"/><path d="M1 4v7h9" fill="none" stroke="#555" stroke-width="1.300"/></svg>

<!-- wxml tree -->
<div class="p" style="left:629px;top:533px;width:892px;height:14px;background:#d9d9d9;border-radius:0 7px 7px 0"></div>
<div class="p" style="left:629px;top:593px;width:892px;height:14px;background:#e8effa;border-radius:0 7px 7px 0"></div>
<div class="p" style="left:629px;top:698px;width:892px;height:14px;background:#f3f3f3;border-radius:0 7px 7px 0"></div>
<div class="p" style="left:706px;top:547px;width:1px;height:151px;background:#a9c6ee"></div>

<div style="position:absolute;left:0;top:1.500px">
<div class="ad" style="left:638px;top:434px"></div><div class="m" style="left:649px;top:429px">&lt;page&gt;</div>
<div class="ar" style="left:655px;top:448px"></div><div class="m" style="left:665px;top:444px">&lt;pickertool  <i>is=</i><u>"utils/pickerTool/pickerTool"</u>  <i>bind:close=</i><u>"pickerCloseAll"</u>  <i>bind:input=</i><u>"pickerInputAll"</u>  <i>data-</i></div>
<div class="m" style="left:655px;top:457px"><i>key=</i><u>"auditing_status"</u>  <i>data-valname=</i><u>"dropdown"</u>&gt;<s>…</s>&lt;/pickertool&gt;</div>
<div class="ad" style="left:655px;top:476px"></div><div class="m" style="left:665px;top:472px">&lt;view  <i>class=</i><u>"all"</u>&gt;</div>
<div class="ar" style="left:671px;top:491px"></div><div class="m" style="left:681px;top:487px">&lt;view  <i>class=</i><u>"title appbackground"</u>&gt;<s>…</s>&lt;/view&gt;</div>
<div class="ad" style="left:671px;top:506px"></div><div class="m" style="left:681px;top:502px">&lt;view  <i>class=</i><u>"dataview"</u>&gt;</div>
<div class="ad" style="left:687px;top:521px"></div><div class="m" style="left:697px;top:517px">&lt;view  <i>class=</i><u>"datas all"</u>&gt;</div>
<div class="ad" style="left:703px;top:536px"></div><div class="m" style="left:713px;top:532px">&lt;scroll-view&gt;</div>
<div class="ar" style="left:719px;top:551px"></div><div class="m" style="left:729px;top:547px">&lt;view  <i>class=</i><u>"itemview"</u>&gt;<s>…</s>&lt;/view&gt;</div>
<div class="ar" style="left:719px;top:566px"></div><div class="m" style="left:729px;top:562px">&lt;view  <i>class=</i><u>"itemview"</u>&gt;<s>…</s>&lt;/view&gt;</div>
<div class="ar" style="left:719px;top:581px"></div><div class="m" style="left:729px;top:577px">&lt;view  <i>class=</i><u>"itemview"</u>&gt;<s>…</s>&lt;/view&gt;</div>
<div class="ar" style="left:719px;top:596px"></div><div class="m" style="left:729px;top:592px">&lt;view  <i>class=</i><u>"itemview"</u>&gt;<s>…</s>&lt;/view&gt;</div>
<div class="ad" style="left:719px;top:611px"></div><div class="m" style="left:729px;top:607px">&lt;view  <i>class=</i><u>"itemview"</u>&gt;</div>
<div class="ar" style="left:735px;top:626px"></div><div class="m" style="left:745px;top:622px">&lt;view  <i>class=</i><u>"item"</u>&gt;<s>…</s>&lt;/view&gt;</div>
<div class="m" style="left:729px;top:637px">&lt;/view&gt;</div>
<div class="ar" style="left:719px;top:656px"></div><div class="m" style="left:729px;top:652px">&lt;view  <i>class=</i><u>"itemview"</u>&gt;<s>…</s>&lt;/view&gt;</div>
<div class="ar" style="left:719px;top:671px"></div><div class="m" style="left:729px;top:667px">&lt;view  <i>class=</i><u>"itemview"</u>&gt;<s>…</s>&lt;/view&gt;</div>
<div class="ar" style="left:719px;top:686px"></div><div class="m" style="left:729px;top:682px">&lt;view  <i>class=</i><u>"itemview"</u>&gt;<s>…</s>&lt;/view&gt;</div>
<div class="m" style="left:713px;top:697px">&lt;/scroll-view&gt;</div>
<div class="m" style="left:697px;top:712px">&lt;/view&gt;</div>
<div class="m" style="left:681px;top:727px">&lt;/view&gt;</div>
<div class="m" style="left:665px;top:742px">&lt;/view&gt;</div>
<div class="m" style="left:649px;top:757px">&lt;/page&gt;</div>
</div>

<!-- styles -->
<div class="p" style="left:1520px;top:420px;width:1px;height:528px;background:#ccc"></div>
<div class="p" style="left:1918px;top:358px;width:1px;height:614px;background:#ddd"></div>
<div class="p" style="left:1521px;top:420px;width:397px;height:28px;background:#f3f3f3"></div>
<div class="p" style="left:1521px;top:420px;width:53px;height:28px;background:#fff"></div>
<div class="dt" style="left:1532px;top:427px;color:#333">Styles</div><div class="dt" style="left:1585px;top:427px;color:#333">Dataset</div><div class="dt" style="left:1648px;top:427px;color:#333">ComponentData</div><div class="dt" style="left:1756px;top:427px;color:#333">ScopeData</div>
<div class="ln2" style="top:448px"></div><div class="ln2" style="top:485px"></div><div class="ln2" style="top:541px"></div><div class="ln2" style="top:597px"></div><div class="ln2" style="top:672px"></div><div class="ln2" style="top:766px"></div><div class="ln2" style="top:860px"></div>
<div style="position:absolute;left:0;top:1.500px;width:1920px">
<div class="y" style="left:1527px;top:453px;color:#777">element.style {</div><div class="y" style="left:1527px;top:468px">}</div>
<div class="y" style="left:1527px;top:490px">scroll-view {</div><div class="src" style="top:490px">./pages/home/home.wxss:112</div><div class="y" style="left:1546px;top:505px"><b>height</b>: 100%;</div><div class="y" style="left:1527px;top:524px">}</div>
<div class="y" style="left:1527px;top:546px">* {</div><div class="ua" style="top:546px">user agent stylesheet</div><div class="y" style="left:1546px;top:561px"><b>margin</b>: 0;</div><div class="y" style="left:1527px;top:580px">}</div>
<div class="y" style="left:1527px;top:602px">scroll-view {</div><div class="ua" style="top:602px">user agent stylesheet</div><div class="y" style="left:1546px;top:617px"><b>display</b>: block;</div><div class="y" style="left:1546px;top:636px"><b>width</b>: 100%;</div><div class="y" style="left:1527px;top:655px">}</div>
<div class="y" style="left:1527px;top:677px">::-webkit-scrollbar {</div><div class="src" style="top:677px">./app.wxss:1</div><div class="y" style="left:1546px;top:692px"><b>width</b>: 0;</div><div class="y" style="left:1546px;top:711px"><b>height</b>: 0;</div><div class="y" style="left:1546px;top:730px"><b>color</b>: transparent;</div><div class="y" style="left:1527px;top:749px">}</div>
<div class="y" style="left:1527px;top:771px">::-webkit-scrollbar {</div><div class="src" style="top:771px">./app.wxss:1</div><div class="y" style="left:1546px;top:786px"><b>width</b>: 0;</div><div class="y" style="left:1546px;top:805px"><b>height</b>: 0;</div><div class="y" style="left:1546px;top:824px"><b>color</b>: transparent;</div><div class="y" style="left:1527px;top:843px">}</div>
</div>

<!-- node breadcrumb -->
<div class="p" style="left:629px;top:948px;width:1291px;height:1px;background:#ccc"></div>
<div class="bc" style="left:656px">page</div><div class="bc" style="left:693px">view.all</div><div class="bc" style="left:742px">view.dataview</div><div class="bc" style="left:827px">view.datas.all</div>
<div class="p" style="left:904px;top:949px;width:66px;height:23px;background:#0074cc"></div>
<div class="bc" style="left:909px;color:#fff">scroll-view</div><div class="bc" style="left:975px">view.itemview</div>

<!-- status bar -->
<div class="p" style="left:0;top:972px;width:429px;height:30px;background:#f3f3f3;border-top:1px solid #d8d8d8"></div>
<div class="p" style="left:429px;top:972px;width:1491px;height:30px;background:#ecebe8;border-top:1px solid #d8d8d8"></div>
<div class="p" style="left:290px;top:972px;width:1px;height:30px;background:#d8d8d8"></div><div class="p" style="left:359px;top:972px;width:1px;height:30px;background:#d8d8d8"></div>
<div class="sb" style="left:10px">页面路径</div><div class="sb" style="left:70px;color:#333">pages/home/home</div><div class="sb" style="left:177px;color:#666">复制</div><div class="sb" style="left:206px;color:#666">预览</div><div class="sb" style="left:307px">场景值</div><div class="sb" style="left:370px">页面参数</div>
<svg class="p" style="left:445px;top:982px" width="12" height="12" viewBox="0 0 12 12"><circle cx="6" cy="6" r="5.300" fill="none" stroke="#999"/><path d="M3.500 3.500l5 5M8.500 3.500l-5 5" stroke="#999"/></svg><div class="sb" style="left:461px">0</div>
<svg class="p" style="left:473px;top:981px" width="12" height="12" viewBox="0 0 12 12"><path d="M6 1l5.500 10H.5z" fill="none" stroke="#999"/><path d="M6 4.500v3.500M6 9v1" stroke="#999"/></svg><div class="sb" style="left:488px">0</div>
<div class="sb" style="left:1615px">行 113，列 16</div><div class="sb" style="left:1706px">空格: 2</div><div class="sb" style="left:1759px">UTF-8</div><div class="sb" style="left:1807px">CRLF</div><div class="sb" style="left:1850px">CSS</div>
<svg class="p" style="left:1887px;top:981px" width="12" height="14" viewBox="0 0 12 14"><path d="M3 10V4a3 3 0 0 1 6 0v6l1 1H2zM5 12.500h2" fill="none" stroke="#888"/></svg><div class="sb" style="left:1903px">1</div>

<!-- annotation -->
<div class="p" style="left:33px;top:79px;font-size:21px;line-height:28px;color:#f42a22;white-space:nowrap;z-index:9">自定义标题栏被滚动了，并不是<span class="big">scroll-view</span>组件滚动了，是<span class="big">page</span>整个页面滚动了</div>
<div class="p" style="left:10px;top:113px;width:413px;height:81px;border:3px solid #fb1a14;border-radius:2px;z-index:9"></div>
</body></html>
